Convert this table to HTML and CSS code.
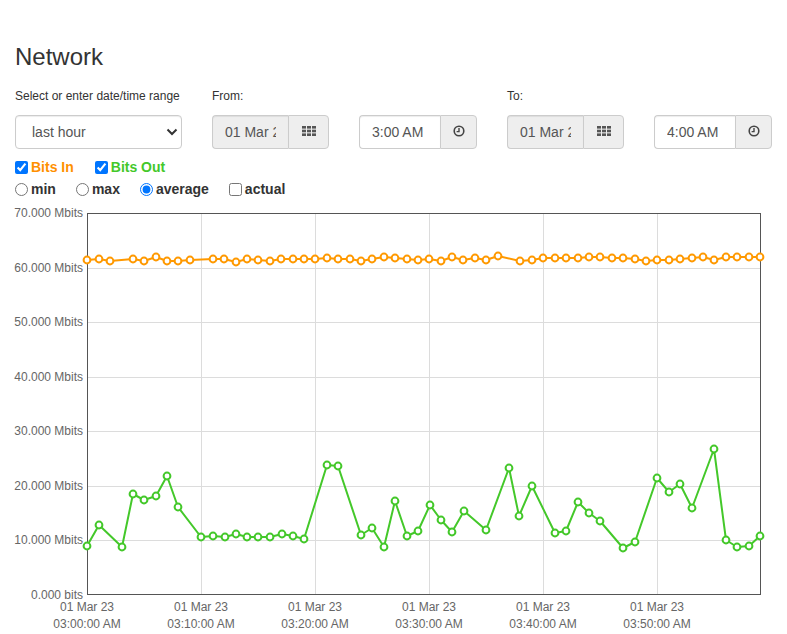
FILE: index.html
```html
<!DOCTYPE html>
<html lang="en">
<head>
<meta charset="utf-8">
<title>Network</title>
<link rel="stylesheet" href="styles.css">
</head>
<body>
<h1 class="title">Network</h1>
<div class="controls">
  <div class="col">
    <div class="lbl">Select or enter date/time range</div>
    <div class="select-wrap">
      <select class="range"><option>last hour</option></select>
      <svg class="chev" width="12" height="8" viewBox="0 0 12 8"><path d="M1.5 1.5 L6 6 L10.5 1.5" fill="none" stroke="#333" stroke-width="2"/></svg>
    </div>
  </div>
  <div class="col">
    <div class="lbl">From:</div>
    <div class="group">
      <input class="inp date" type="text" value="01 Mar 23" readonly>
      <span class="btn btn-date"><svg width="14" height="10" viewBox="0 0 14 10"><g fill="#555"><rect x="0" y="0" width="4" height="2.6"/><rect x="5" y="0" width="4" height="2.6"/><rect x="10" y="0" width="4" height="2.6"/><rect x="0" y="3.7" width="4" height="2.6"/><rect x="5" y="3.7" width="4" height="2.6"/><rect x="10" y="3.7" width="4" height="2.6"/><rect x="0" y="7.4" width="4" height="2.6"/><rect x="5" y="7.4" width="4" height="2.6"/><rect x="10" y="7.4" width="4" height="2.6"/></g></svg></span>
    </div>
  </div>
  <div class="col">
    <div class="lbl">&nbsp;</div>
    <div class="group">
      <input class="inp time" type="text" value="3:00 AM">
      <span class="btn btn-time"><svg width="12" height="12" viewBox="0 0 12 12"><circle cx="6" cy="6" r="4.8" fill="none" stroke="#444" stroke-width="1.6"/><path d="M6 3 V6.6 H3.6" fill="none" stroke="#444" stroke-width="1.4"/></svg></span>
    </div>
  </div>
  <div class="col">
    <div class="lbl">To:</div>
    <div class="group">
      <input class="inp date" type="text" value="01 Mar 23" readonly>
      <span class="btn btn-date"><svg width="14" height="10" viewBox="0 0 14 10"><g fill="#555"><rect x="0" y="0" width="4" height="2.6"/><rect x="5" y="0" width="4" height="2.6"/><rect x="10" y="0" width="4" height="2.6"/><rect x="0" y="3.7" width="4" height="2.6"/><rect x="5" y="3.7" width="4" height="2.6"/><rect x="10" y="3.7" width="4" height="2.6"/><rect x="0" y="7.4" width="4" height="2.6"/><rect x="5" y="7.4" width="4" height="2.6"/><rect x="10" y="7.4" width="4" height="2.6"/></g></svg></span>
    </div>
  </div>
  <div class="col">
    <div class="lbl">&nbsp;</div>
    <div class="group">
      <input class="inp time" type="text" value="4:00 AM">
      <span class="btn btn-time"><svg width="12" height="12" viewBox="0 0 12 12"><circle cx="6" cy="6" r="4.8" fill="none" stroke="#444" stroke-width="1.6"/><path d="M6 3 V6.6 H3.6" fill="none" stroke="#444" stroke-width="1.4"/></svg></span>
    </div>
  </div>
</div>
<div class="opts">
  <label class="opt in"><input type="checkbox" checked>Bits In</label>
  <label class="opt out"><input type="checkbox" checked>Bits Out</label>
</div>
<div class="opts">
  <label class="opt"><input type="radio" name="agg">min</label>
  <label class="opt"><input type="radio" name="agg">max</label>
  <label class="opt"><input type="radio" name="agg" checked>average</label>
  <label class="opt"><input type="checkbox">actual</label>
</div>
<svg class="chart" width="787" height="434" viewBox="0 200 787 434">
  <g stroke="#dcdcdc" stroke-width="1">
    <line x1="87" y1="268.5" x2="761" y2="268.5"/>
    <line x1="87" y1="322.5" x2="761" y2="322.5"/>
    <line x1="87" y1="377.5" x2="761" y2="377.5"/>
    <line x1="87" y1="431.5" x2="761" y2="431.5"/>
    <line x1="87" y1="486.5" x2="761" y2="486.5"/>
    <line x1="87" y1="540.5" x2="761" y2="540.5"/>
    <line x1="201.5" y1="213" x2="201.5" y2="595"/>
    <line x1="315.5" y1="213" x2="315.5" y2="595"/>
    <line x1="429.5" y1="213" x2="429.5" y2="595"/>
    <line x1="543.5" y1="213" x2="543.5" y2="595"/>
    <line x1="657.5" y1="213" x2="657.5" y2="595"/>
  </g>
  <rect x="87.5" y="213.5" width="673" height="381" fill="none" stroke="#555" stroke-width="1"/>
  <g class="ylab" text-anchor="end">
    <text x="83" y="217">70.000 Mbits</text>
    <text x="83" y="272">60.000 Mbits</text>
    <text x="83" y="326">50.000 Mbits</text>
    <text x="83" y="381">40.000 Mbits</text>
    <text x="83" y="435">30.000 Mbits</text>
    <text x="83" y="490">20.000 Mbits</text>
    <text x="83" y="544">10.000 Mbits</text>
    <text x="83" y="599">0.000 bits</text>
  </g>
  <g class="xlab" text-anchor="middle">
    <text x="87" y="611">01 Mar 23</text><text x="87" y="628">03:00:00 AM</text>
    <text x="201" y="611">01 Mar 23</text><text x="201" y="628">03:10:00 AM</text>
    <text x="315" y="611">01 Mar 23</text><text x="315" y="628">03:20:00 AM</text>
    <text x="429" y="611">01 Mar 23</text><text x="429" y="628">03:30:00 AM</text>
    <text x="543" y="611">01 Mar 23</text><text x="543" y="628">03:40:00 AM</text>
    <text x="657" y="611">01 Mar 23</text><text x="657" y="628">03:50:00 AM</text>
  </g>
  <g id="series"></g>
</svg>
<script src="chart.js"></script>
</body>
</html>
```

FILE: chart.js
```js
(function () {
  var NS = 'http://www.w3.org/2000/svg';
  var g = document.getElementById('series');
  var series = [
    { color: '#ff9900', pts: [87,260,99,259,110,261,133,259,144,261,156,257,167,261,178,261,190,260,213,259,224,259,236,262,247,259,258,260,270,261,281,259,293,259,304,259,315,259,327,258,338,259,350,259,361,261,372,259,384,257,395,258,407,259,418,260,429,259,441,261,452,257,463,260,475,258,486,260,498,256,520,261,532,260,543,258,555,258,566,258,578,258,589,257,600,257,612,258,623,258,635,259,646,261,657,260,669,260,680,259,692,258,703,257,714,260,726,257,737,257,749,257,760,257] },
    { color: '#44c82a', pts: [87,546,99,525,122,547,133,494,144,500,156,496,167,476,178,507,201,537,213,536,225,537,236,534,247,537,258,537,270,537,282,534,293,536,304,539,327,465,338,466,361,535,372,528,384,547,395,501,407,536,418,531,430,505,441,520,452,532,464,511,486,530,509,468,519,516,532,486,555,533,566,531,578,502,589,513,600,521,623,548,635,542,657,478,669,492,680,484,692,508,714,449,726,540,737,547,749,546,760,536] }
  ];
  series.forEach(function (s) {
    var d = '';
    for (var i = 0; i < s.pts.length; i += 2) {
      d += (i ? ' L' : 'M') + s.pts[i] + ' ' + s.pts[i + 1];
    }
    var p = document.createElementNS(NS, 'path');
    p.setAttribute('d', d);
    p.setAttribute('fill', 'none');
    p.setAttribute('stroke', s.color);
    p.setAttribute('stroke-width', '2');
    p.setAttribute('stroke-linejoin', 'round');
    g.appendChild(p);
    for (var j = 0; j < s.pts.length; j += 2) {
      var c = document.createElementNS(NS, 'circle');
      c.setAttribute('cx', s.pts[j]);
      c.setAttribute('cy', s.pts[j + 1]);
      c.setAttribute('r', '3.4');
      c.setAttribute('fill', '#fff');
      c.setAttribute('stroke', s.color);
      c.setAttribute('stroke-width', '2');
      g.appendChild(c);
    }
  });
})();
```

FILE: styles.css
```css
html, body {
  margin: 0;
  padding: 0;
  background: #fff;
}
body {
  padding: 0 15px;
  font-family: "Liberation Sans", Arial, sans-serif;
  color: #333;
  font-size: 14px;
}
.title {
  margin: 44px 0 0;
  font-size: 24px;
  font-weight: 500;
  line-height: 26px;
  color: #333;
}
.controls {
  display: flex;
  gap: 30px;
  margin-top: 18px;
}
.col {
  display: flex;
  flex-direction: column;
}
.lbl {
  font-size: 12px;
  line-height: 17px;
  height: 17px;
  margin-bottom: 10px;
  color: #333;
}
.select-wrap {
  position: relative;
  width: 167px;
  height: 34px;
}
.range {
  -webkit-appearance: none;
  appearance: none;
  box-sizing: border-box;
  width: 167px;
  height: 34px;
  margin: 0;
  padding: 0 0 0 16px;
  border: 1px solid #ccc;
  border-radius: 4px;
  background: #fff;
  font-family: "Liberation Sans", Arial, sans-serif;
  font-size: 14px;
  color: #555;
  box-shadow: inset 0 1px 1px rgba(0,0,0,0.075);
}
.chev {
  position: absolute;
  right: 4px;
  top: 13px;
  pointer-events: none;
}
.group {
  display: flex;
  height: 34px;
}
.inp {
  box-sizing: border-box;
  height: 34px;
  margin: 0;
  padding: 6px 12px;
  border: 1px solid #ccc;
  border-right: none;
  border-radius: 4px 0 0 4px;
  font-family: "Liberation Sans", Arial, sans-serif;
  font-size: 14px;
  color: #555;
  outline: none;
  box-shadow: inset 0 1px 1px rgba(0,0,0,0.075);
}
.inp.date {
  width: 76px;
  background: #eee;
}
.inp.time {
  width: 81px;
  background: #fff;
}
.btn {
  box-sizing: border-box;
  display: flex;
  align-items: center;
  justify-content: center;
  height: 34px;
  border: 1px solid #ccc;
  border-radius: 0 4px 4px 0;
  background: #eee;
}
.btn-date {
  width: 41px;
  padding-bottom: 3px;
}
.btn-time {
  width: 37px;
  padding-bottom: 2px;
}
.opts {
  display: flex;
  line-height: 22px;
  height: 22px;
  font-size: 14px;
  font-weight: bold;
  color: #333;
}
.controls + .opts {
  margin-top: 7px;
}
.opt {
  display: flex;
  align-items: center;
  margin-right: 20px;
}
.opt input {
  margin: 0 3px 0 0;
  width: 13px;
  height: 13px;
}
.opt.in {
  color: #ff9000;
  margin-right: 21px;
}
.opt.out {
  color: #44c82a;
}
.chart {
  display: block;
  margin-left: -15px;
}
.ylab text, .xlab text {
  font-family: "Liberation Sans", Arial, sans-serif;
  font-size: 12px;
  fill: #666;
}
```
